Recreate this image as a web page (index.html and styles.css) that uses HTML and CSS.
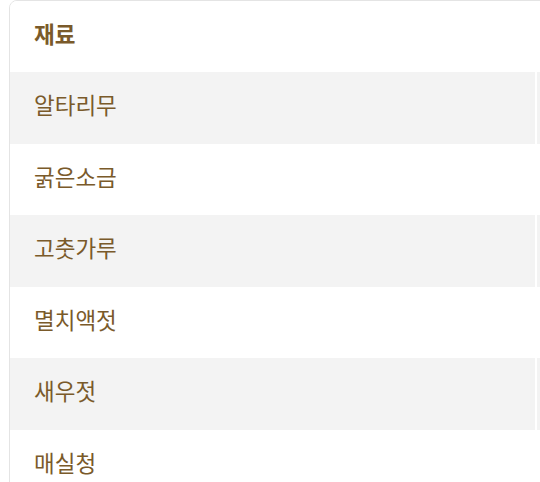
FILE: index.html
```html
<!DOCTYPE html>
<html lang="ko">
<head>
<meta charset="utf-8">
<link rel="stylesheet" href="styles.css">
</head>
<body>
<div class="table-wrap">
  <table class="recipe">
    <thead>
      <tr><th>재료</th><th></th></tr>
    </thead>
    <tbody>
      <tr class="alt"><td>알타리무</td><td></td></tr>
      <tr><td>굵은소금</td><td></td></tr>
      <tr class="alt"><td>고춧가루</td><td></td></tr>
      <tr><td>멸치액젓</td><td></td></tr>
      <tr class="alt"><td>새우젓</td><td></td></tr>
      <tr><td>매실청</td><td></td></tr>
    </tbody>
  </table>
</div>
</body>
</html>
```
FILE: styles.css
```css
html, body {
  margin: 0;
  padding: 0;
  background: #ffffff;
  overflow: hidden;
}
.table-wrap {
  margin-left: 9px;
  width: 760px;
  border: 1px solid #e4e4e4;
  border-radius: 8px;
  overflow: hidden;
}
.recipe {
  border-collapse: collapse;
  width: 100%;
  font-family: "Noto Sans CJK KR", "Noto Sans", sans-serif;
  font-size: 22.5px;
  line-height: 31.5px;
  color: #7a5a2a;
}
.recipe th,
.recipe td {
  text-align: left;
  padding: 17px 24px 23px;
  height: 31.5px;
  box-sizing: content-box;
}
.recipe th {
  padding-bottom: 22.5px;
  font-weight: 700;
  background: #ffffff;
}
.recipe th:first-child,
.recipe td:first-child {
  width: 477px;
  border-right: 2px solid #ffffff;
}
.recipe tr.alt td {
  background: #f3f3f3;
}
```
